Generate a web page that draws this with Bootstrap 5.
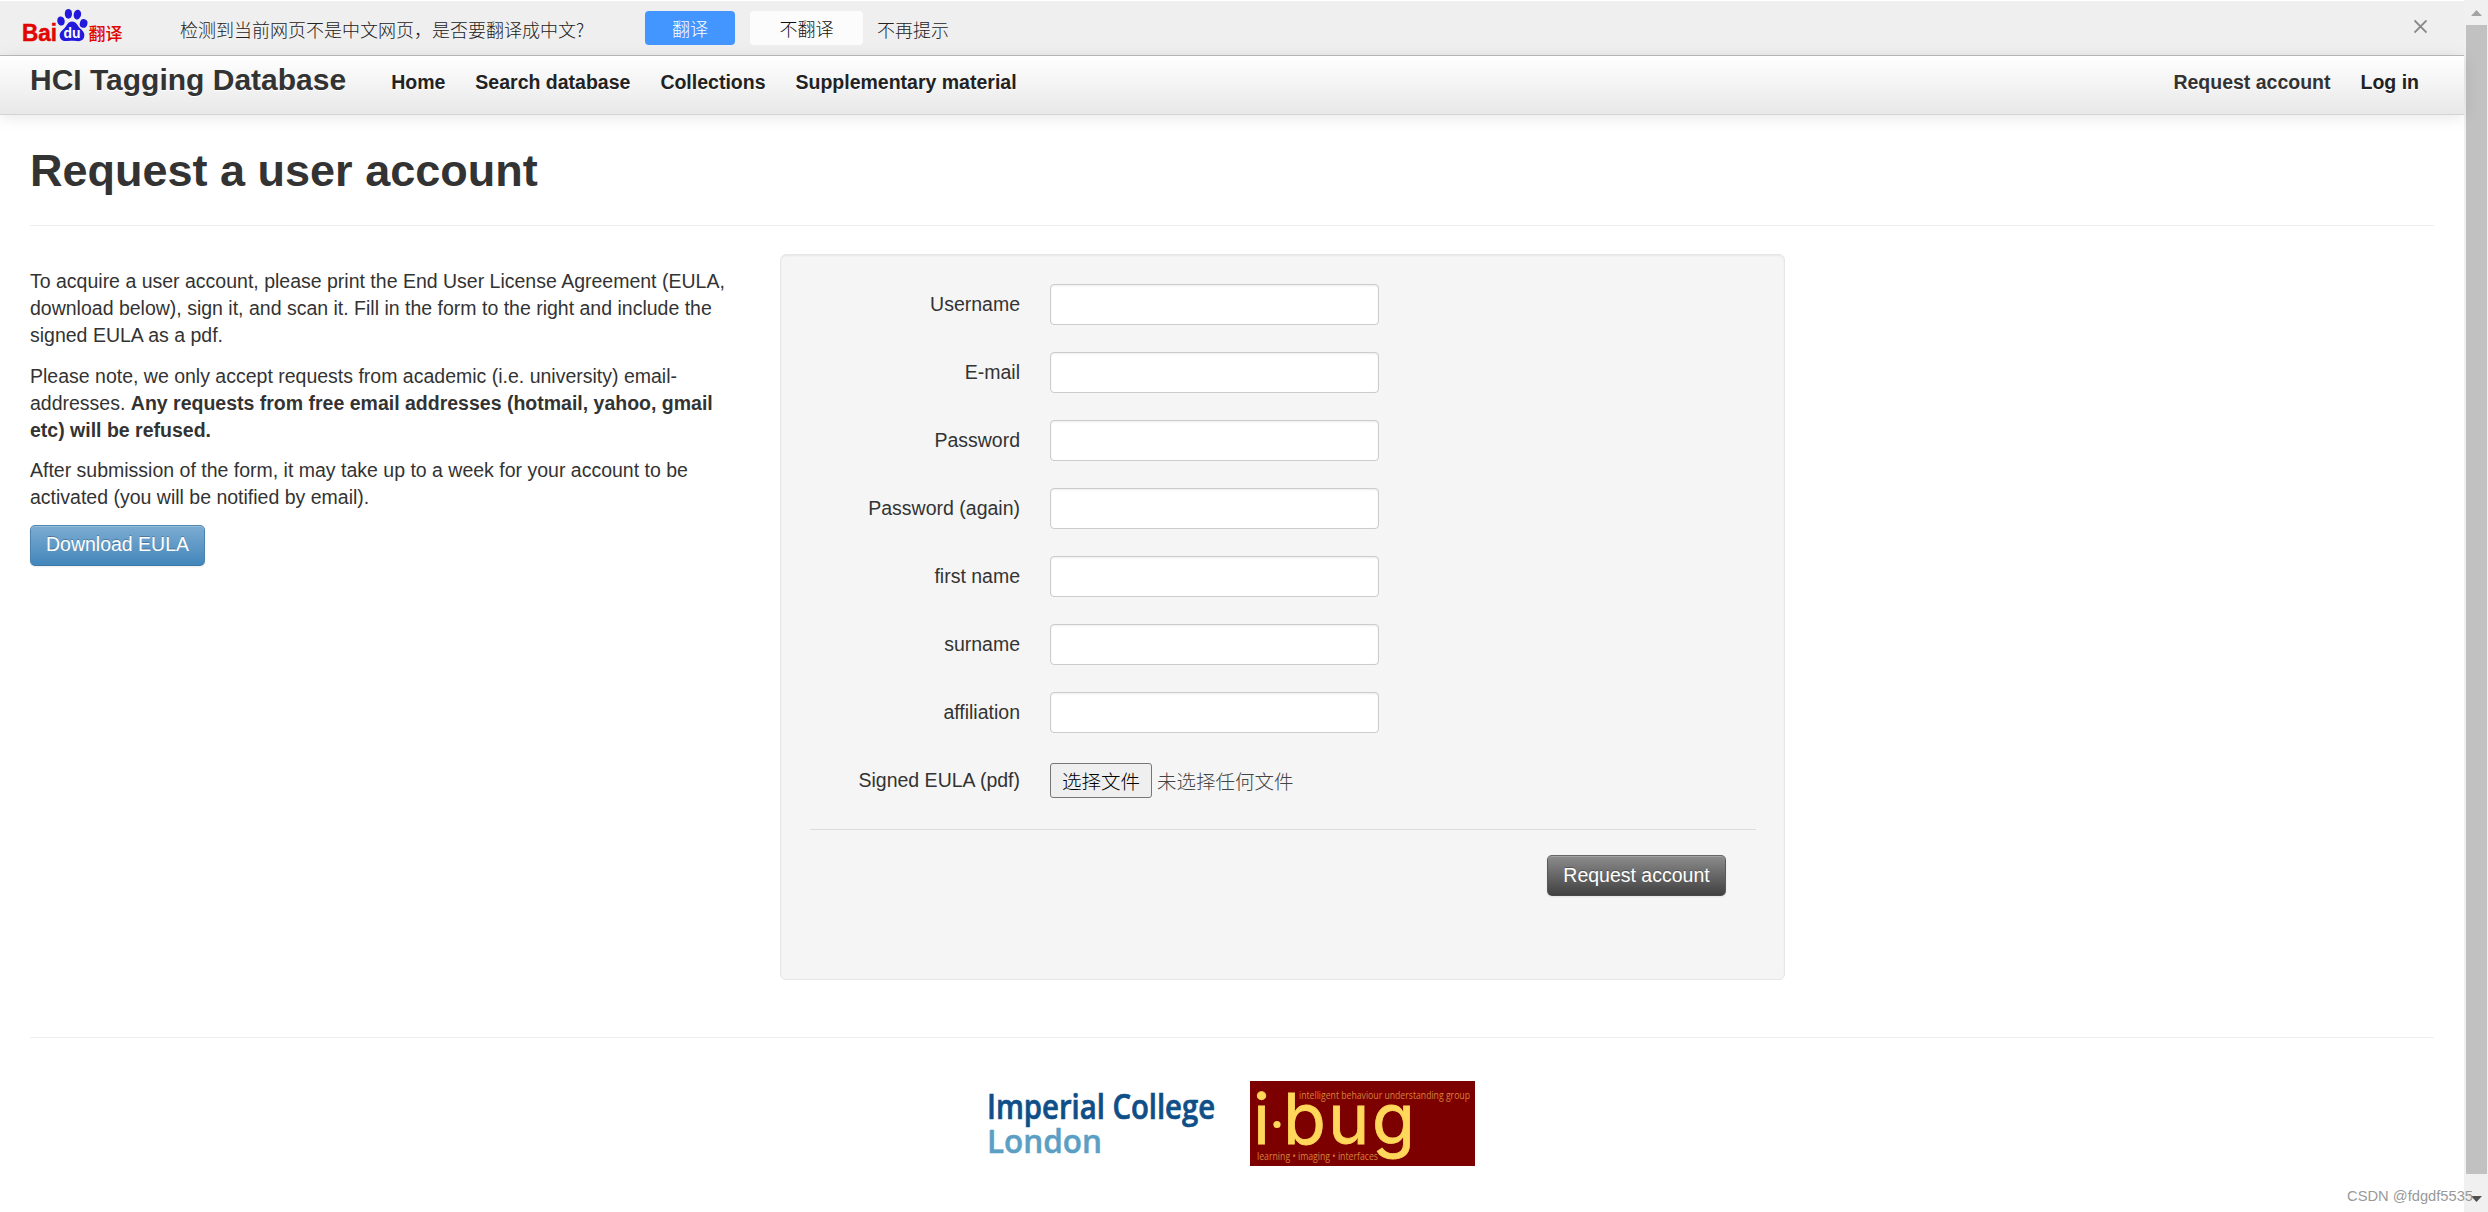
<!DOCTYPE html>
<html lang="en">
<head>
  <meta charset="UTF-8">
  <meta name="viewport" content="width=device-width, initial-scale=1.0">
  <title>HCI Tagging Database - Request a user account</title>
  <link rel="stylesheet" href="https://cdn.jsdelivr.net/npm/bootstrap@5.3.2/dist/css/bootstrap.min.css">
  <style>
    html, body { height: 100%; margin: 0; }
    body {
      font-family: "Liberation Sans", "Noto Sans CJK SC", sans-serif;
      font-size: 19.5px;
      line-height: 27px;
      color: #333;
      background: #fff;
      overflow: hidden;
    }
    p { margin-bottom: 13.5px; }

    /* translate bar */
    .translate-bar {
      height: 56px;
      padding: 0 37px 0 22px;
      background: #efefef;
      border-top: 1px solid #fff;
      border-bottom: 1px solid #bbb;
      font-family: "Noto Sans CJK SC", sans-serif;
      font-size: 18px;
      font-weight: 300;
      line-height: 34px;
      color: #222;
    }
    .translate-row { padding-top: 10px; }
    .translate-msg { width: 465px; margin-left: 56px; padding-top: 1px; }
    .translate-btn {
      height: 34px;
      padding: 0;
      border: 0;
      border-radius: 4px;
      font-size: 18px;
      font-weight: 300;
      line-height: 34px;
    }
    .btn-yes { width: 90px; background: #4395ff; color: #fff; }
    .btn-no { width: 113px; margin-left: 15px; background: #fcfcfc; color: #111; }
    .translate-never { margin-left: 14px; padding-top: 1px; }

    /* site header */
    .site-nav {
      height: 59px;
      padding: 0 30px;
      background: linear-gradient(#fff, #e8e8e8);
      border-bottom: 1px solid #d4d4d4;
      box-shadow: 0 2px 15px rgba(0,0,0,.1);
      text-shadow: 0 1px 0 #fff;
      font-weight: bold;
    }
    .site-nav .navbar-brand {
      font-size: 30px;
      line-height: 30px;
      padding: 0;
      margin: 0 30px 10px 0;
      color: #333;
    }
    .site-nav .navbar-nav .nav-link { padding: 0 15px 6px; color: #222; }
    .site-nav .navbar-nav .nav-link.active { color: #333; }

    main { padding: 0 30px; }
    .page-title {
      height: 111px;
      padding-top: 29px;
      border-bottom: 1px solid #eee;
    }
    .page-title h1 { font-size: 45px; font-weight: bold; line-height: 54px; margin: 0; }
    .main-row { gap: 30px; padding-top: 28px; }
    .info-col { width: 720px; padding-top: 14px; }
    .form-well {
      width: 1005px;
      height: 726px;
      padding: 29px 28px 29px 29px;
      background: #f5f5f5;
      border: 1px solid #e7e7e7;
      border-radius: 6px;
      box-shadow: inset 0 1px 2px rgba(0,0,0,.06);
    }
    .field-row { height: 41px; gap: 30px; margin-bottom: 27px; }
    .field-row label { width: 210px; text-align: right; padding-bottom: 1px; }
    .field-row .form-control {
      width: 329px;
      height: 41px;
      border: 1px solid #ccc;
      border-radius: 4px;
      box-shadow: inset 0 1px 2px rgba(0,0,0,.08);
    }
    .file-row { height: 42px; }
    .file-btn {
      width: 102px;
      height: 35px;
      padding: 0;
      border: 1px solid #767676;
      border-radius: 3px;
      background: #efefef;
      color: #000;
      font-size: 19.5px;
      font-weight: 300;
      line-height: 36px;
    }
    .file-btn:not(:hover) { color: #000; }
    .file-none { margin-left: 5px; color: #444; font-weight: 300; line-height: 35px; padding-top: 2px; }
    .form-line { height: 1px; background: #ddd; }
    .form-buttons { padding: 25px 30px 0 0; }

    .btn-shaded {
      height: 41px;
      padding: 0;
      font-size: 19.5px;
      line-height: 37px;
      white-space: nowrap;
      color: #fff;
      border-radius: 5px;
      text-shadow: 0 -1px 0 rgba(0,0,0,.25);
      box-shadow: inset 0 1px 0 rgba(255,255,255,.2), 0 1px 2px rgba(0,0,0,.08);
    }
    .btn-blue, .btn-blue:hover { width: 175px; color: #fff; background: linear-gradient(#7cacd2, #4386bb); border-color: #5289b5 #4a83b0 #3c77a5; }
    .btn-grey, .btn-grey:hover { width: 179px; color: #fff; background: linear-gradient(#8c8c8c, #414141); border-color: #666 #595959 #484848; }

    .site-footer { gap: 35px; margin-top: 57px; padding-top: 43px; border-top: 1px solid #eee; }

    /* scroll bar */
    .scroll-col { width: 24px; padding: 10px 1px 10px 2px; background: #f0f0f0; }
    .scroll-thumb { width: 21px; height: 1149px; margin-top: 9px; background: #c1c1c1; }
    .watermark {
      right: 15px;
      bottom: 5px;
      font-size: 14.7px;
      line-height: 22px;
      color: #999;
      z-index: 5;
    }
  </style>
</head>
<body class="d-flex">

<div class="flex-grow-1 d-flex flex-column">
  <div class="translate-bar d-flex align-items-start">
    <svg width="102" height="48" viewBox="22 0 102 48">
      <g fill="#e10602" font-family="'Liberation Sans', sans-serif" font-weight="bold">
        <text x="22" y="39.5" font-size="23" stroke="#e10602" stroke-width=".5" textLength="35" lengthAdjust="spacingAndGlyphs">Bai</text>
        <text x="88.5" y="38.5" font-size="17" font-weight="500" font-family="'Noto Sans CJK SC', sans-serif" textLength="34" lengthAdjust="spacingAndGlyphs">翻译</text>
      </g>
      <g fill="#2319dc">
        <ellipse cx="61" cy="20" rx="3.7" ry="4.6" transform="rotate(-12 61 20)"/>
        <ellipse cx="68.4" cy="12.8" rx="3.6" ry="4.9"/>
        <ellipse cx="77.4" cy="13.6" rx="3.7" ry="5" transform="rotate(12 77.4 13.6)"/>
        <ellipse cx="83.6" cy="22.4" rx="3.8" ry="4.4" transform="rotate(15 83.6 22.4)"/>
        <path d="M72 20.5c4.500 0 5.500 4.500 8.500 7.300 3.500 3 4.500 5.200 3.500 8.700-1 3.200-4.500 4-8 3.500-3-.5-5-.5-8 0-4 .5-7.200-.5-8.100-4-.8-3.700 1-5.500 4-8.200 3-2.800 3.800-7.300 8.100-7.300z"/>
      </g>
      <text x="63.500" y="37" font-size="15" fill="#fff" font-family="'Liberation Sans', sans-serif" font-weight="bold" textLength="17" lengthAdjust="spacingAndGlyphs">du</text>
    </svg>
    <div class="translate-row d-flex">
      <span class="translate-msg text-nowrap">检测到当前网页不是中文网页，是否要翻译成中文?</span>
      <button class="btn translate-btn btn-yes">翻译</button>
      <button class="btn translate-btn btn-no">不翻译</button>
      <span class="translate-never">不再提示</span>
    </div>
    <svg class="ms-auto" width="13" height="33" viewBox="0 0 13 33" fill="none" stroke="#888" stroke-width="1.8">
      <path d="M.5 19.500l12 12M12.500 19.500l-12 12"/>
    </svg>
  </div>

  <nav class="site-nav navbar navbar-expand">
    <a class="navbar-brand" href="#">HCI Tagging Database</a>
    <ul class="navbar-nav">
      <li class="nav-item"><a class="nav-link" href="#">Home</a></li>
      <li class="nav-item"><a class="nav-link" href="#">Search database</a></li>
      <li class="nav-item"><a class="nav-link" href="#">Collections</a></li>
      <li class="nav-item"><a class="nav-link" href="#">Supplementary material</a></li>
    </ul>
    <ul class="navbar-nav ms-auto">
      <li class="nav-item"><a class="nav-link active" href="#">Request account</a></li>
      <li class="nav-item"><a class="nav-link" href="#">Log in</a></li>
    </ul>
  </nav>

  <main>
    <div class="page-title">
      <h1>Request a user account</h1>
    </div>

    <div class="main-row d-flex">
      <div class="info-col">
        <p>To acquire a user account, please print the End User License Agreement (EULA, download below), sign it, and scan it. Fill in the form to the right and include the signed EULA as a pdf.</p>
        <p>Please note, we only accept requests from academic (i.e. university) email-addresses. <strong>Any requests from free email addresses (hotmail, yahoo, gmail etc) will be refused.</strong></p>
        <p>After submission of the form, it may take up to a week for your account to be activated (you will be notified by email).</p>
        <a class="btn btn-shaded btn-blue" href="#">Download EULA</a>
      </div>

      <form class="form-well">
        <div id="fields"></div>
        <div class="field-row file-row d-flex align-items-center">
          <label>Signed EULA (pdf)</label>
          <div class="d-flex">
            <button type="button" class="btn file-btn">选择文件</button>
            <span class="file-none">未选择任何文件</span>
          </div>
        </div>
        <div class="form-line"></div>
        <div class="form-buttons d-flex justify-content-end">
          <button type="button" class="btn btn-shaded btn-grey">Request account</button>
        </div>
      </form>
    </div>

    <footer class="site-footer d-flex justify-content-center">
      <svg width="226" height="85" viewBox="0 0 226 85" font-family="'Open Sans', sans-serif" font-weight="600">
        <text x="-2" y="38" font-size="34" fill="#0f4f88" stroke="#0f4f88" stroke-width=".7" textLength="228" lengthAdjust="spacingAndGlyphs">Imperial College</text>
        <text x="-2" y="72" font-size="33" fill="#5b9fc4" stroke="#5b9fc4" stroke-width=".5" textLength="115" lengthAdjust="spacingAndGlyphs">London</text>
      </svg>
      <svg width="225" height="85" viewBox="0 0 225 85">
        <rect width="225" height="85" fill="#7d0000"/>
        <g fill="#d5803a" font-family="'Open Sans', sans-serif" font-size="11.500">
          <text x="49" y="17.500" textLength="171" lengthAdjust="spacingAndGlyphs">intelligent behaviour understanding group</text>
          <text x="7" y="79" textLength="121" lengthAdjust="spacingAndGlyphs">learning • imaging • interfaces</text>
        </g>
        <text y="63" font-family="Inter, sans-serif" font-size="70" fill="#ffd75a" stroke="#ffd75a" stroke-width=".8"><tspan x="3">i</tspan><tspan x="33">b</tspan><tspan x="78">u</tspan><tspan x="122">g</tspan></text>
        <circle cx="27" cy="43.500" r="3.600" fill="#ffd75a"/>
      </svg>
    </footer>
  </main>
</div>

<div class="scroll-col d-flex flex-column align-items-center">
  <svg width="21" height="6" viewBox="0 0 21 6"><path d="M5 6l5.500-6L16 6z" fill="#a3a3a3"/></svg>
  <div class="scroll-thumb"></div>
  <svg class="mt-auto" width="21" height="6" viewBox="0 0 21 6"><path d="M5 0l5.500 6L16 0z" fill="#505050"/></svg>
</div>
<div class="watermark position-absolute">CSDN @fdgdf5535</div>

<script src="https://cdn.jsdelivr.net/npm/bootstrap@5.3.2/dist/js/bootstrap.bundle.min.js"></script>
<script>
  const fields = [
    ["Username", "text"],
    ["E-mail", "text"],
    ["Password", "password"],
    ["Password (again)", "password"],
    ["first name", "text"],
    ["surname", "text"],
    ["affiliation", "text"]
  ];

  function displayFields() {
    let html = "";
    fields.forEach((field, index) => {
      html += `
        <div class="field-row d-flex align-items-center">
          <label for="field${index}">${field[0]}</label>
          <input class="form-control" type="${field[1]}" id="field${index}">
        </div>`;
    });
    document.getElementById("fields").innerHTML = html;
  }

  displayFields();
</script>

</body>
</html>
